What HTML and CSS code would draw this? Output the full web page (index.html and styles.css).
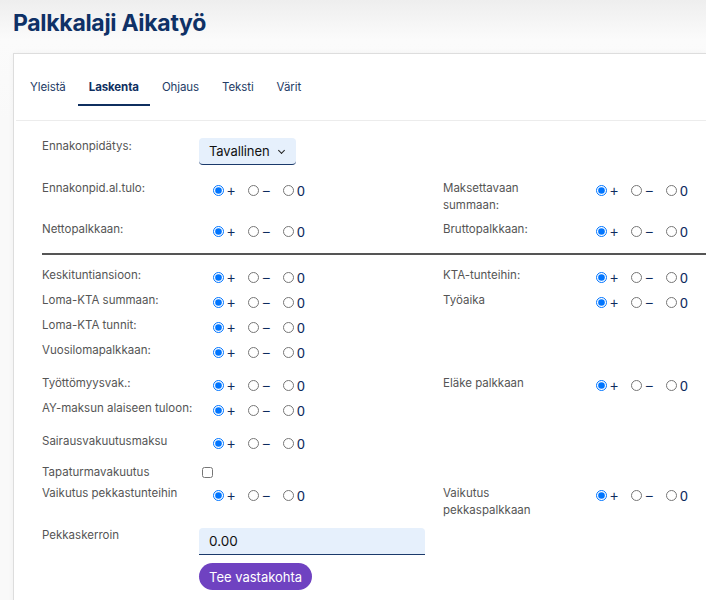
FILE: index.html
```html
<!DOCTYPE html>
<html>
  <head>
    <title>Palkkalaji Aikatyö</title>
    <meta charset="UTF-8" />
    <meta name="viewport" content="width=device-width, initial-scale=1.0" />
    <link rel="stylesheet" href="styles.css">
  </head>
  <body>
    <h1 class="page-title">Palkkalaji Aikatyö</h1>

    <div class="card">
      <ul class="tabs">
        <li class="tab">Yleistä</li>
        <li class="tab active">Laskenta</li>
        <li class="tab">Ohjaus</li>
        <li class="tab">Teksti</li>
        <li class="tab">Värit</li>
      </ul>

      <form class="calc-form">
        <div class="form-row">
          <label class="field-label">Ennakonpidätys:</label>
          <div>
            <div class="select-wrap">
              <select class="select">
                <option>Tavallinen</option>
              </select>
            </div>
          </div>
        </div>

        <div class="form-row gap-15">
          <label class="field-label">Ennakonpid.al.tulo:</label>
          <div class="radio-group">
            <label class="opt"><input type="radio" name="r1" checked>+</label>
            <label class="opt"><input type="radio" name="r1">−</label>
            <label class="opt"><input type="radio" name="r1">0</label>
          </div>
          <label class="field-label side">Maksettavaan summaan:</label>
          <div class="radio-group">
            <label class="opt"><input type="radio" name="r2" checked>+</label>
            <label class="opt"><input type="radio" name="r2">−</label>
            <label class="opt"><input type="radio" name="r2">0</label>
          </div>
        </div>

        <div class="form-row gap-7">
          <label class="field-label">Nettopalkkaan:</label>
          <div class="radio-group">
            <label class="opt"><input type="radio" name="r3" checked>+</label>
            <label class="opt"><input type="radio" name="r3">−</label>
            <label class="opt"><input type="radio" name="r3">0</label>
          </div>
          <label class="field-label side">Bruttopalkkaan:</label>
          <div class="radio-group">
            <label class="opt"><input type="radio" name="r4" checked>+</label>
            <label class="opt"><input type="radio" name="r4">−</label>
            <label class="opt"><input type="radio" name="r4">0</label>
          </div>
        </div>

        <hr class="divider">

        <div class="form-row gap-12">
          <label class="field-label">Keskituntiansioon:</label>
          <div class="radio-group">
            <label class="opt"><input type="radio" name="r5" checked>+</label>
            <label class="opt"><input type="radio" name="r5">−</label>
            <label class="opt"><input type="radio" name="r5">0</label>
          </div>
          <label class="field-label side">KTA-tunteihin:</label>
          <div class="radio-group">
            <label class="opt"><input type="radio" name="r6" checked>+</label>
            <label class="opt"><input type="radio" name="r6">−</label>
            <label class="opt"><input type="radio" name="r6">0</label>
          </div>
        </div>

        <div class="form-row">
          <label class="field-label">Loma-KTA summaan:</label>
          <div class="radio-group">
            <label class="opt"><input type="radio" name="r7" checked>+</label>
            <label class="opt"><input type="radio" name="r7">−</label>
            <label class="opt"><input type="radio" name="r7">0</label>
          </div>
          <label class="field-label side">Työaika</label>
          <div class="radio-group">
            <label class="opt"><input type="radio" name="r8" checked>+</label>
            <label class="opt"><input type="radio" name="r8">−</label>
            <label class="opt"><input type="radio" name="r8">0</label>
          </div>
        </div>

        <div class="form-row">
          <label class="field-label">Loma-KTA tunnit:</label>
          <div class="radio-group">
            <label class="opt"><input type="radio" name="r9" checked>+</label>
            <label class="opt"><input type="radio" name="r9">−</label>
            <label class="opt"><input type="radio" name="r9">0</label>
          </div>
        </div>

        <div class="form-row">
          <label class="field-label">Vuosilomapalkkaan:</label>
          <div class="radio-group">
            <label class="opt"><input type="radio" name="r10" checked>+</label>
            <label class="opt"><input type="radio" name="r10">−</label>
            <label class="opt"><input type="radio" name="r10">0</label>
          </div>
        </div>

        <div class="form-row gap-12">
          <label class="field-label">Työttömyysvak.:</label>
          <div class="radio-group">
            <label class="opt"><input type="radio" name="r11" checked>+</label>
            <label class="opt"><input type="radio" name="r11">−</label>
            <label class="opt"><input type="radio" name="r11">0</label>
          </div>
          <label class="field-label side">Eläke palkkaan</label>
          <div class="radio-group">
            <label class="opt"><input type="radio" name="r12" checked>+</label>
            <label class="opt"><input type="radio" name="r12">−</label>
            <label class="opt"><input type="radio" name="r12">0</label>
          </div>
        </div>

        <div class="form-row">
          <label class="field-label">AY-maksun alaiseen tuloon:</label>
          <div class="radio-group">
            <label class="opt"><input type="radio" name="r13" checked>+</label>
            <label class="opt"><input type="radio" name="r13">−</label>
            <label class="opt"><input type="radio" name="r13">0</label>
          </div>
        </div>

        <div class="form-row gap-12">
          <label class="field-label">Sairausvakuutusmaksu</label>
          <div class="radio-group">
            <label class="opt"><input type="radio" name="r14" checked>+</label>
            <label class="opt"><input type="radio" name="r14">−</label>
            <label class="opt"><input type="radio" name="r14">0</label>
          </div>
        </div>

        <div class="form-row gap-10">
          <label class="field-label">Tapaturmavakuutus</label>
          <div class="check-cell"><input type="checkbox" class="check"></div>
        </div>

        <div class="form-row gap-4">
          <label class="field-label">Vaikutus pekkastunteihin</label>
          <div class="radio-group">
            <label class="opt"><input type="radio" name="r15" checked>+</label>
            <label class="opt"><input type="radio" name="r15">−</label>
            <label class="opt"><input type="radio" name="r15">0</label>
          </div>
          <label class="field-label side">Vaikutus pekkaspalkkaan</label>
          <div class="radio-group">
            <label class="opt"><input type="radio" name="r16" checked>+</label>
            <label class="opt"><input type="radio" name="r16">−</label>
            <label class="opt"><input type="radio" name="r16">0</label>
          </div>
        </div>

        <div class="form-row gap-8">
          <label class="field-label">Pekkaskerroin</label>
          <div class="input-cell">
            <input type="text" class="text-input" value="0.00">
            <button type="button" class="btn-purple">Tee vastakohta</button>
          </div>
        </div>
      </form>
    </div>
  </body>
</html>
```

FILE: styles.css
```css
body {
  margin: 0;
  font-family: Inter, "Noto Sans", sans-serif;
  background: linear-gradient(#eeeeee 0, #fbfbfb 40px, #f9f9f9 120px);
  min-height: 600px;
  overflow: hidden;
}
.page-title {
  margin: 0;
  padding: 9px 0 0 13px;
  height: 53px;
  box-sizing: border-box;
  font-size: 23px;
  font-weight: 700;
  letter-spacing: -0.3px;
  color: #0f3166;
}
.card {
  margin-left: 13px;
  min-height: 560px;
  background: white;
  border-left: 1px solid #dddddd;
  border-top: 1px solid #dddddd;
  box-shadow: 0 0 6px rgba(0,0,0,0.04);
}
.tabs {
  list-style: none;
  display: flex;
  gap: 1px;
  margin: 0 0 0 2px;
  padding: 16px 0 14px 3px;
  border-bottom: 1px solid #ececec;
}
.tab {
  padding: 9px 11px 8px;
  font-size: 11.5px;
  line-height: 17px;
  letter-spacing: -0.1px;
  color: #243c66;
  border-bottom: 2px solid transparent;
}
.tab.active {
  font-weight: 700;
  color: #0f2f5f;
  border-bottom-color: #0f2f5f;
}
.calc-form {
  padding: 17px 0 40px 28px;
}
.form-row {
  display: grid;
  grid-template-columns: 157px 244px 139px 1fr;
  align-items: start;
  margin-top: 4px;
}
.form-row:first-child {
  margin-top: 0;
}
.gap-4 { margin-top: 4px; }
.gap-7 { margin-top: 7px; }
.gap-8 { margin-top: 8px; }
.gap-10 { margin-top: 10px; }
.gap-12 { margin-top: 12px; }
.gap-15 { margin-top: 15px; }
.field-label {
  font-size: 11.5px;
  line-height: 17px;
  color: #555555;
}
.field-label.side {
  max-width: 118px;
}
.radio-group {
  display: flex;
  align-items: center;
  height: 21px;
  padding-left: 14px;
}
.opt {
  display: flex;
  align-items: center;
  width: 35px;
  font-family: "Liberation Sans", Arial, sans-serif;
  font-size: 14px;
  color: #0d2b5e;
}
.opt input {
  width: 11px;
  height: 11px;
  margin: 0 3px 0 0;
}
.check-cell {
  display: flex;
  align-items: center;
  height: 17px;
  padding-left: 3px;
}
.check {
  width: 11px;
  height: 11px;
  margin: 0;
}
.select-wrap {
  position: relative;
  width: 97px;
}
.select-wrap::after {
  content: "";
  position: absolute;
  right: 12px;
  top: 10px;
  width: 4px;
  height: 4px;
  border-right: 1.5px solid #222222;
  border-bottom: 1.5px solid #222222;
  transform: rotate(45deg);
  pointer-events: none;
}
.select {
  appearance: none;
  box-sizing: border-box;
  height: 27px;
  width: 97px;
  padding: 0 0 0 10px;
  font-family: Inter, sans-serif;
  font-size: 13px;
  letter-spacing: -0.1px;
  color: #111111;
  background-color: #e6f0fc;
  border: none;
  border-bottom: 1px solid #1b3a6b;
  border-radius: 4px;
}
.input-cell {
  display: flex;
  flex-direction: column;
  align-items: flex-start;
  gap: 8px;
  padding-top: 1px;
}
.text-input {
  box-sizing: border-box;
  width: 226px;
  height: 27px;
  padding: 0 10px;
  font-family: Inter, sans-serif;
  font-size: 13.5px;
  color: #111111;
  background: #e6f0fc;
  border: none;
  border-bottom: 1px solid #1b3a6b;
  border-radius: 4px 4px 0 0;
}
.divider {
  margin: 11px 0 0 0;
  border: none;
  border-top: 2px solid #555555;
}
.btn-purple {
  height: 27px;
  padding: 0 10px;
  font-family: Inter, sans-serif;
  font-size: 13px;
  color: white;
  background-color: #6f42c1;
  border: none;
  border-radius: 14px;
  cursor: pointer;
}
```
